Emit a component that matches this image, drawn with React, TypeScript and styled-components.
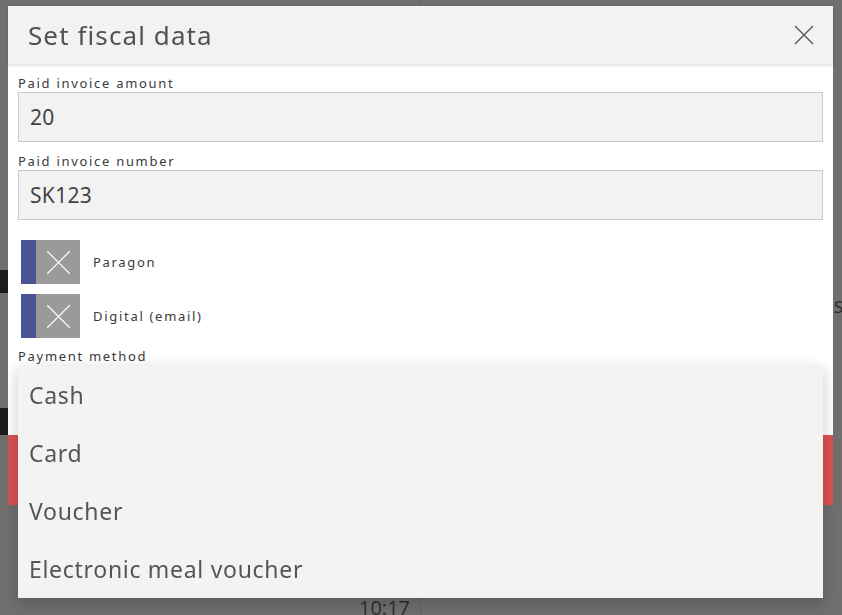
import React, { useState } from "react"
import styled, { createGlobalStyle } from "styled-components"

const GlobalStyle = createGlobalStyle`
  html, body {
    margin: 0;
    padding: 0;
    width: 100%;
    height: 100%;
    overflow: hidden;
  }
  body {
    font-family: "Noto Sans", "Open Sans", sans-serif;
    background: #6f6f6f;
  }
`

// underlying (dimmed) page
const Page = styled("div")`
  display: grid;
  grid-template-columns: 421px 1fr;
  width: 842px;
  height: 615px;
  background: #6f6f6f;
`

const LeftCol = styled("div")`
  display: flex;
  flex-direction: column;
  border-right: 1px solid #626262;
`

const RightCol = styled("div")`
  display: flex;
  flex-direction: column;
`

const DarkBar = styled("div")<{ $top: number; $h: number }>`
  margin-top: ${(p) => p.$top}px;
  height: ${(p) => p.$h}px;
  background: #1c1c1c;
`

const Clock = styled("div")`
  margin-top: auto;
  padding-right: 10px;
  text-align: right;
  font-family: "Open Sans", sans-serif;
  font-size: 20px;
  line-height: 20px;
  color: #2e2e2e;
  height: 17px;
  overflow: hidden;
`

const SideText = styled("div")`
  margin-top: 296px;
  padding-left: 413px;
  font-size: 17px;
  line-height: 22px;
  color: #2a2a2a;
`

// dialog
const Dialog = styled("div")`
  position: fixed;
  top: 6px;
  left: 8px;
  width: 825px;
  height: 499px;
  display: flex;
  flex-direction: column;
  background: #fff;
`

const Header = styled("div")`
  display: flex;
  align-items: center;
  justify-content: space-between;
  height: 58px;
  padding: 0 19px 0 20px;
  background: #f2f2f2;
  box-shadow: 0 2px 3px rgba(0, 0, 0, 0.12);
  position: relative;
  z-index: 1;
`

const Title = styled("h1")`
  margin: 0;
  font-size: 26px;
  font-weight: 400;
  letter-spacing: 1.1px;
  color: #525252;
`

const CloseButton = styled("button")`
  display: flex;
  width: 20px;
  height: 20px;
  padding: 0;
  border: 0;
  background: none;
  cursor: pointer;
`

const Body = styled("div")`
  flex: 1;
  display: flex;
  flex-direction: column;
  padding: 11px 10px 0;
`

const Label = styled("label")`
  display: block;
  font-size: 13px;
  line-height: 17px;
  letter-spacing: 1.7px;
  color: #3a3a3a;
`

const Field = styled("div")<{ $gap?: number }>`
  display: flex;
  flex-direction: column;
  margin-bottom: ${(p) => p.$gap ?? 0}px;
`

const Input = styled("input")`
  box-sizing: border-box;
  height: 50px;
  padding: 0 11px;
  border: 1px solid #cacaca;
  background: #f2f2f2;
  font-family: inherit;
  font-size: 21px;
  letter-spacing: 0.3px;
  color: #444;
  outline: none;
`

const ToggleRow = styled("div")`
  display: flex;
  align-items: center;
  gap: 13px;
  margin-left: 3px;
  margin-bottom: 10px;
`

const Toggle = styled("div")`
  display: flex;
  width: 59px;
  height: 44px;
`

const ToggleBar = styled("div")`
  width: 15px;
  background: #4a5493;
`

const ToggleBox = styled("div")`
  flex: 1;
  display: flex;
  align-items: center;
  justify-content: center;
  background: #9a9a9a;
`

const ToggleLabel = styled("span")`
  font-size: 13px;
  letter-spacing: 1.7px;
  color: #3a3a3a;
`

const SelectWrap = styled("div")`
  position: relative;
  height: 50px;
  margin-top: 1px;
`

const Menu = styled("ul")`
  position: absolute;
  top: 0;
  left: 0;
  right: 0;
  margin: 0;
  padding: 0;
  list-style: none;
  background: #f3f3f3;
  box-shadow: 0 4px 14px rgba(0, 0, 0, 0.22);
  z-index: 5;
`

const MenuItem = styled("li")`
  height: 58px;
  display: flex;
  align-items: center;
  padding-left: 11px;
  font-size: 23px;
  letter-spacing: 0.7px;
  color: #555;
  cursor: pointer;
`

const DangerButton = styled("button")`
  height: 70px;
  border: 0;
  background: #d95152;
  color: #fff;
`

const Cross = ({ size, color, width }: { size: number; color: string; width: number }) => (
  <svg width={size} height={size} viewBox="0 0 20 20">
    <path d="M1 1 L19 19 M19 1 L1 19" stroke={color} strokeWidth={width} fill="none" />
  </svg>
)

const methods = ["Cash", "Card", "Voucher", "Electronic meal voucher"]

const App: React.FC = () => {
  const [amount, setAmount] = useState("20")
  const [number, setNumber] = useState("SK123")

  return (
    <>
      <GlobalStyle />
      <Page>
        <LeftCol>
          <DarkBar $top={270} $h={23} />
          <DarkBar $top={115} $h={27} />
          <Clock>10:17</Clock>
        </LeftCol>
        <RightCol>
          <SideText>S</SideText>
        </RightCol>
      </Page>
      <Dialog>
        <Header>
          <Title>Set fiscal data</Title>
          <CloseButton aria-label="close">
            <Cross size={20} color="#555" width={1.4} />
          </CloseButton>
        </Header>
        <Body>
          <Field $gap={11}>
            <Label>Paid invoice amount</Label>
            <Input value={amount} onChange={(e) => setAmount(e.target.value)} />
          </Field>
          <Field $gap={20}>
            <Label>Paid invoice number</Label>
            <Input value={number} onChange={(e) => setNumber(e.target.value)} />
          </Field>
          <ToggleRow>
            <Toggle>
              <ToggleBar />
              <ToggleBox>
                <Cross size={25} color="#fff" width={0.9} />
              </ToggleBox>
            </Toggle>
            <ToggleLabel>Paragon</ToggleLabel>
          </ToggleRow>
          <ToggleRow>
            <Toggle>
              <ToggleBar />
              <ToggleBox>
                <Cross size={25} color="#fff" width={0.9} />
              </ToggleBox>
            </Toggle>
            <ToggleLabel>Digital (email)</ToggleLabel>
          </ToggleRow>
          <Label>Payment method</Label>
          <SelectWrap>
            <Menu>
              {methods.map((m) => (
                <MenuItem key={m}>{m}</MenuItem>
              ))}
            </Menu>
          </SelectWrap>
        </Body>
        <DangerButton />
      </Dialog>
    </>
  )
}

export default App
